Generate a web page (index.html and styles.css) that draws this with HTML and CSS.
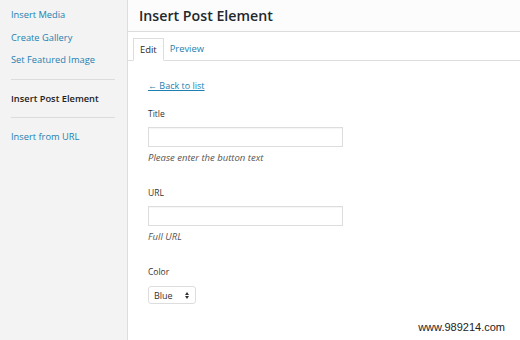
FILE: index.html
```html
<!DOCTYPE html>
<html>
<head>
<meta charset="utf-8">
<link rel="stylesheet" href="styles.css">
</head>
<body>
<div class="modal">
  <aside class="menu">
    <a class="item link">Insert Media</a>
    <a class="item link">Create Gallery</a>
    <a class="item link">Set Featured Image</a>
    <div class="sep"></div>
    <a class="item active">Insert Post Element</a>
    <div class="sep"></div>
    <a class="item link">Insert from URL</a>
  </aside>
  <main class="frame">
    <header class="title-bar"><h1>Insert Post Element</h1></header>
    <nav class="tabs">
      <span class="tab current">Edit</span>
      <span class="tab">Preview</span>
    </nav>
    <section class="content">
      <a class="back">&larr; Back to list</a>
      <div class="field first">
        <label>Title</label>
        <input class="text" type="text">
        <p class="hint">Please enter the button text</p>
      </div>
      <div class="field">
        <label>URL</label>
        <input class="text" type="text">
        <p class="hint">Full URL</p>
      </div>
      <div class="field">
        <label>Color</label>
        <div class="select"><span>Blue</span><span class="arrows"><i class="up"></i><i class="down"></i></span></div>
      </div>
    </section>
  </main>
</div>
<div class="watermark">www.989214.com</div>
</body>
</html>
```

FILE: styles.css
```css
* { box-sizing: border-box; }
html, body { margin: 0; padding: 0; width: 520px; height: 340px; overflow: hidden; background: #fff; }
body { font-family: "Open Sans", "Noto Sans", sans-serif; font-size: 11px; color: #444; position: relative; }
.modal { display: flex; height: 340px; }
.menu {
  width: 128px; flex: none; background: #f3f3f3; border-right: 1px solid #dddddd;
  padding: 4px 11px 0 11px; display: flex; flex-direction: column;
}
.item { display: block; font-size: 9.3px; line-height: 22.5px; text-decoration: none; }
.item.link { color: #1e7fb0; }
.item.active { color: #222; font-weight: 600; }
.sep { height: 1px; background: #dcdcdc; margin: 7px 1px 8px 0; }
.frame { flex: 1; display: flex; flex-direction: column; }
.title-bar { height: 32px; background: #fcfcfc; border-bottom: 1px solid #dddddd; padding: 0 11px; display: flex; align-items: center; }
.title-bar h1 { margin: 0 0 1px; font-size: 14.2px; font-weight: 600; color: #23282d; letter-spacing: 0; }
.tabs { height: 29px; border-bottom: 1px solid #dddddd; display: flex; align-items: flex-end; padding-left: 5px; }
.tab { font-size: 9.4px; color: #1e7fb0; padding: 0 6px; line-height: 22px; }
.tab.current { color: #2a2a2a; background: #fff; border: 1px solid #dddddd; border-bottom: 1px solid #fff; margin-bottom: -1px; line-height: 21px; padding: 0 6px; }
.content { padding: 16px 20px 0 20px; }
.back { display: inline-block; color: #1e7fb0; text-decoration: underline; font-size: 9px; line-height: 14px; }
.field { margin-top: 14px; }
.field + .field { margin-top: 22px; }
.field label { display: block; font-size: 8.5px; color: #333; line-height: 13px; margin-bottom: 7px; }
.text { display: block; width: 195px; height: 20px; border: 1px solid #dddddd; background: #fff; box-shadow: inset 0 1px 1px rgba(0,0,0,0.04); margin: 0; padding: 0; }
.hint { margin: 4px 0 0; font-style: italic; font-size: 9.5px; color: #555; line-height: 13px; }
.select {
  width: 48px; height: 18px; border: 1px solid #dddddd; border-radius: 3px; background: #fff;
  display: flex; align-items: center; justify-content: space-between; padding: 0 6px 0 5px;
  font-size: 9px; color: #333; margin-top: 8px;
}
.arrows { display: flex; flex-direction: column; gap: 1px; }
.arrows i { width: 0; height: 0; border-left: 2px solid transparent; border-right: 2px solid transparent; }
.arrows .up { border-bottom: 3px solid #333; }
.arrows .down { border-top: 3px solid #333; }
.watermark { position: absolute; right: 15px; bottom: 7px; font-family: "Liberation Sans", Arial, sans-serif; font-size: 11px; color: #222; }
```
